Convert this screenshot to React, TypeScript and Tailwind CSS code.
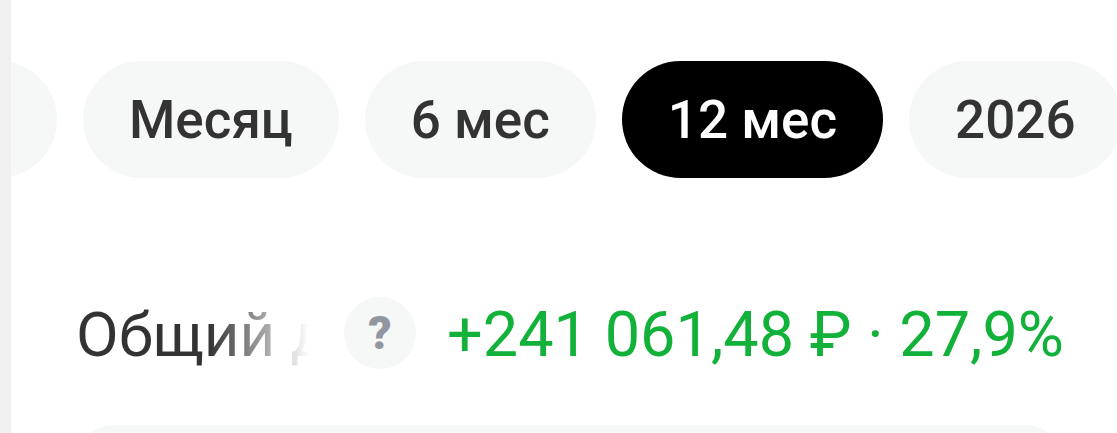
import { useState } from "react";

const periods = ["Месяц", "6 мес", "12 мес", "2026"];

export default function App() {
  const [selected, setSelected] = useState("12 мес");

  return (
    <div className="h-screen overflow-hidden bg-white border-l-[11px] border-[#f0f0f0] font-['Roboto',sans-serif] text-[#333333]">
      {/* Выбор периода */}
      <div className="flex gap-[26px] pt-[61px] overflow-hidden">
        <button
          type="button"
          aria-label="Неделя"
          className="-ml-[71px] h-[117px] w-[117px] shrink-0 rounded-full bg-[#f6f8f8]"
        />
        {periods.map((period) => (
          <button
            key={period}
            type="button"
            aria-pressed={period === selected}
            onClick={() => setSelected(period)}
            className={`h-[117px] shrink-0 rounded-full px-[46px] pt-0.5 text-[53px] font-medium whitespace-nowrap ${
              period === selected ? "bg-black text-white" : "bg-[#f6f8f8]"
            }`}
          >
            {period}
          </button>
        ))}
      </div>

      {/* Общий доход */}
      <div className="flex items-start pt-[119px] pl-[65px] pr-[53px]">
        <div className="w-[233px] shrink-0 overflow-hidden whitespace-nowrap text-[62px] leading-[76px] bg-linear-to-r from-[#333333] from-57% to-transparent bg-clip-text text-transparent">
          Общий д
        </div>
        <button
          type="button"
          aria-label="Подсказка"
          className="ml-[35px] size-[72px] shrink-0 rounded-full bg-[#f6f8f8] text-[46px] font-black text-[#9196a0]"
        >
          ?
        </button>
        <div className="ml-auto whitespace-nowrap text-[63px] leading-[76px] text-[#12b23a]">
          +241 061,48 ₽ · 27,9%
        </div>
      </div>

      <div className="mt-[52px] ml-[66px] mr-[55px] h-[120px] rounded-[36px] bg-[#f6f8f8]" />
    </div>
  );
}
